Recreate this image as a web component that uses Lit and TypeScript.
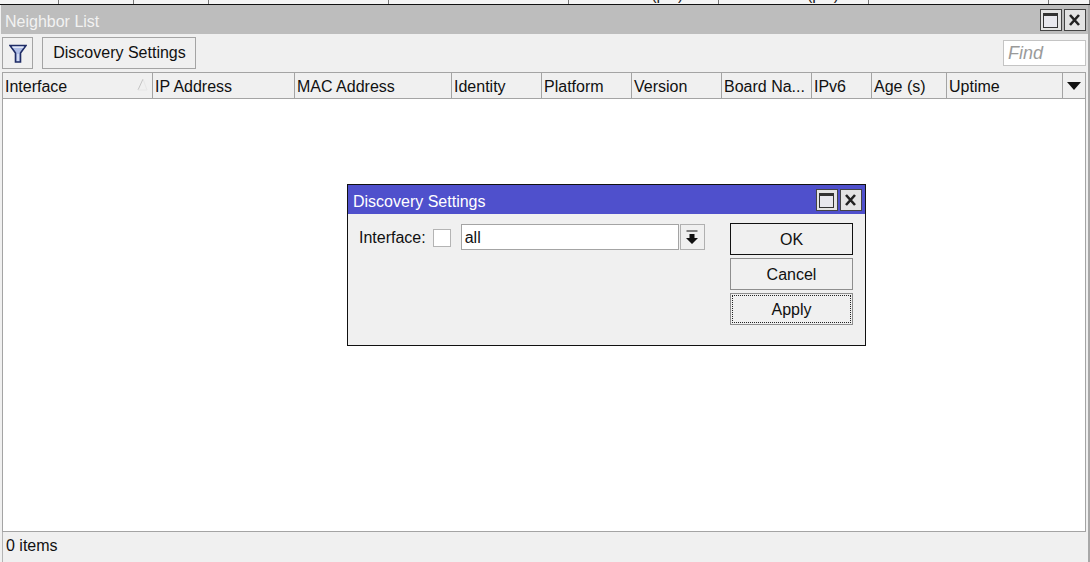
import { LitElement, html, css, svg } from "lit";
import { customElement } from "lit/decorators.js";

const TOP = [59, 75, 75, 180, 180, 150, 150, 180, 41];
const COLS: [string, number][] = [
  ["Interface", 150], ["IP Address", 142], ["MAC Address", 157], ["Identity", 90],
  ["Platform", 90], ["Version", 90], ["Board Na...", 90], ["IPv6", 60], ["Age (s)", 75], ["Uptime", 116],
];

const maxIcon = html`<svg viewBox="0 0 22 22" width="22" height="22"><rect x="3.5" y="4.5" width="14" height="14" fill="#e8e8ee" stroke="#333" stroke-width="1"/><rect x="3" y="4" width="15" height="3" fill="#333"/></svg>`;
const closeIcon = html`<svg viewBox="0 0 22 22" width="22" height="22"><path d="M6 6 L15 16 M15 6 L6 16" stroke="#222" stroke-width="2.6" fill="none"/></svg>`;

@customElement("app-root")
export class AppRoot extends LitElement {
  static styles = css`
    :host { display: block; width: 1090px; height: 562px; position: relative; overflow: hidden;
      background: #f0f0f0; font-family: "Liberation Sans", Arial, sans-serif; font-size: 16px; color: #111; }
    .page { display: flex; flex-direction: column; height: 562px; }
    .strip { height: 4px; flex: none; display: flex; background: #f4f4f4; border-bottom: 1px solid #111; overflow: hidden; }
    .strip div { box-sizing: border-box; border-right: 1px solid #777; flex: none; height: 4px; overflow: hidden; position: relative; }
    .strip span { position: absolute; top: -13px; font-size: 16px; line-height: 16px; white-space: nowrap; color: #222; }
    .s5 { left: 60px; }
    .s6 { left: 64px; }
    .win { flex: 1; display: flex; flex-direction: column; min-height: 0; padding: 0 2px; border-right: 2px solid #a8a8a8; }
    .title { height: 29px; flex: none; background: #bdbdbd; display: flex; align-items: center; justify-content: space-between;
      color: #f2f2f2; padding: 0 2px 0 4px; margin: 0 -2px 0 -1px; }
    .ttl { margin-top: 4px; }
    .btns { display: flex; gap: 2px; margin-top: 1px; }
    .wb { box-sizing: border-box; width: 22px; height: 22px; background: #e4e4e4; border: 1px solid #444; display: flex; align-items: center; justify-content: center; }
    .wb svg { flex: none; margin: -1px; }
    .toolbar { height: 38px; flex: none; display: flex; align-items: center; gap: 9px; }
    .tb { box-sizing: border-box; height: 32px; border: 1px solid #a4a4a4; background: #f0f0f0; display: flex; align-items: center; justify-content: center; }
    .filter { width: 31px; }
    .disc { width: 154px; padding-left: 1px; }
    .find { box-sizing: border-box; margin-left: auto; width: 83px; height: 26px; background: #fff; border: 1px solid #c4c4c4;
      color: #9a9a9a; font-style: italic; font-size: 18px; padding-left: 4px; display: flex; align-items: center; }
    .head { height: 27px; flex: none; box-sizing: border-box; display: flex; border: 1px solid #a4a4a4; border-right: none; background: #f0f0f0; }
    .col { box-sizing: border-box; flex: none; border-right: 1px solid #a4a4a4; padding: 2px 0 0 2px; display: flex; align-items: center; white-space: nowrap; position: relative; }
    .sort { position: absolute; right: 4px; top: 5px; }
    .menu { flex: 1; display: flex; align-items: center; justify-content: center; border-right: 1px solid #a4a4a4; }
    .body { flex: 1; background: #fff; border-left: 1px solid #a4a4a4; border-right: 1px solid #a4a4a4; border-bottom: 1px solid #a4a4a4; }
    .status { height: 30px; flex: none; box-sizing: border-box; display: flex; align-items: center; padding: 0 0 2px 3px; border-left: 1px solid #b4b4b4; }
    .dlg { position: absolute; left: 347px; top: 184px; width: 519px; height: 162px; box-sizing: border-box; border: 1px solid #111; background: #f0f0f0; display: flex; flex-direction: column; }
    .dtitle { height: 29px; flex: none; background: #4f50cc; color: #fff; display: flex; align-items: center; justify-content: space-between; padding: 0 3px 0 5px; }
    .dbody { flex: 1; display: flex; padding: 9px 12px 0 11px; }
    .form { flex: 1; display: flex; align-items: flex-start; height: 27px; margin-top: 1px; }
    .lbl { box-sizing: border-box; height: 26px; padding-top: 1px; display: flex; align-items: center; margin-right: 7px; }
    .cb { box-sizing: border-box; width: 18px; height: 18px; margin-top: 5px; background: #fff; border: 1px solid #b4b4b4; margin-right: 10px; }
    .inp { box-sizing: border-box; width: 218px; height: 26px; background: #fff; border: 1px solid #a4a4a4; display: flex; align-items: center; padding: 2px 0 0 3px; }
    .drop { box-sizing: border-box; width: 25px; height: 26px; margin-left: 1px; border: 1px solid #b0b0b0; display: flex; align-items: center; justify-content: center; }
    .actions { display: flex; flex-direction: column; gap: 3px; width: 123px; }
    .ab { box-sizing: border-box; height: 32px; padding-top: 2px; border: 1px solid #8e8e8e; display: flex; align-items: center; justify-content: center; }
    .ok { border-color: #111; }
    .apply { position: relative; }
    .apply::after { content: ""; position: absolute; inset: 1px; border: 1px dotted #222; }
  `;

  render() {
    return html`
      <div class="page">
        <div class="strip">
          ${TOP.map((w, i) => html`<div style="width:${w}px">${i === 5 ? html`<span class="s5">Tx (p/s)</span>` : i === 6 ? html`<span class="s6">Rx (p/s)</span>` : ""}</div>`)}
        </div>
        <div class="win">
          <div class="title"><span class="ttl">Neighbor List</span>
            <div class="btns"><div class="wb">${maxIcon}</div><div class="wb">${closeIcon}</div></div></div>
          <div class="toolbar">
            <div class="tb filter">
              <svg width="18" height="19" viewBox="0 0 18 19">
                <path d="M1 1.5 H17 L11.5 9 V18 H6.5 V9 Z" fill="#aebde6" stroke="#1f2c66" stroke-width="1.6" stroke-linejoin="miter"/>
                <path d="M3.5 3.2 H14.5" stroke="#eef1fa" stroke-width="1.2"/>
                <path d="M9 10 V17" stroke="#dfe5f6" stroke-width="1.4"/>
              </svg>
            </div>
            <div class="tb disc">Discovery Settings</div>
            <div class="find">Find</div>
          </div>
          <div class="head">
            ${COLS.map(([t, w], i) => html`<div class="col" style="width:${w}px">${t}${i === 0 ? html`
              <svg class="sort" width="11" height="13" viewBox="0 0 11 13">${svg`<path d="M6 1 L1 12" fill="none" stroke="#c4c4c4"/><path d="M6 1 L10 12 H1" fill="none" stroke="#e6e6e6"/>`}</svg>` : ""}</div>`)}
            <div class="menu"><svg width="14" height="8" viewBox="0 0 14 8"><path d="M0 0 H14 L7 8 Z" fill="#111"/></svg></div>
          </div>
          <div class="body"></div>
          <div class="status">0 items</div>
        </div>
      </div>
      <div class="dlg">
        <div class="dtitle"><span class="ttl">Discovery Settings</span>
          <div class="btns"><div class="wb">${maxIcon}</div><div class="wb">${closeIcon}</div></div></div>
        <div class="dbody">
          <div class="form">
            <span class="lbl">Interface:</span>
            <div class="cb"></div>
            <div class="inp">all</div>
            <div class="drop"><svg width="12" height="15" viewBox="0 0 12 15"><path d="M0.5 1 H11.5" stroke="#111" stroke-width="1"/><path d="M3.5 4 H8.5 V8 H12 L6 14 L0 8 H3.5 Z" fill="#111"/></svg></div>
          </div>
          <div class="actions">
            <div class="ab ok">OK</div>
            <div class="ab">Cancel</div>
            <div class="ab apply">Apply</div>
          </div>
        </div>
      </div>
    `;
  }
}
